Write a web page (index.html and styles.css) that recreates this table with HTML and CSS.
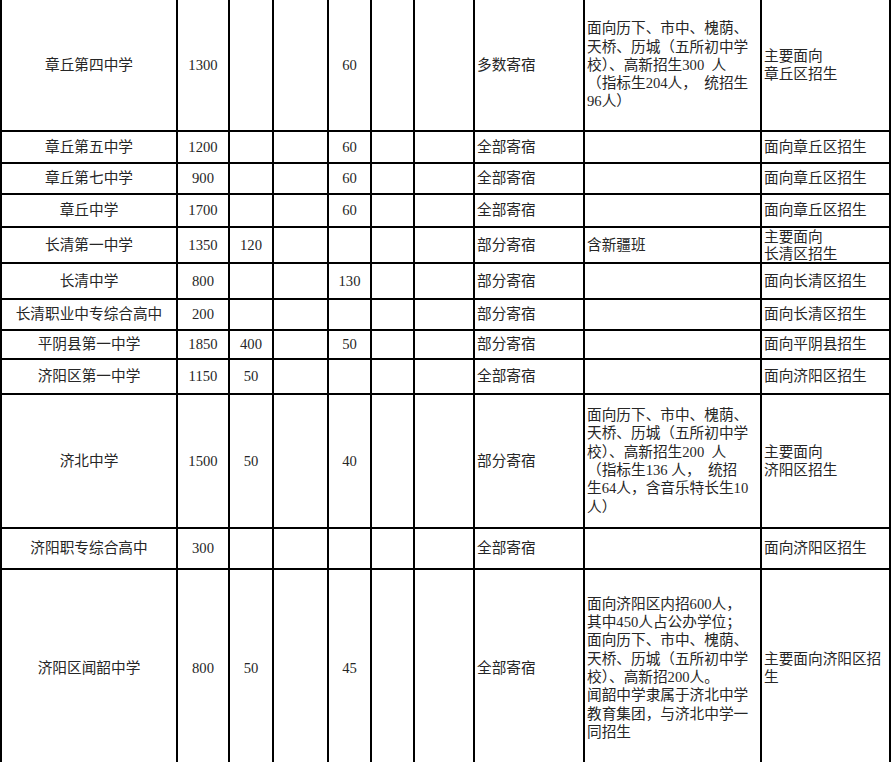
FILE: index.html
```html
<!DOCTYPE html>
<html lang="zh-CN">
<head>
<meta charset="utf-8">
<title>招生计划表</title>
<link rel="stylesheet" href="styles.css">
</head>
<body>
<table class="sheet">
  <colgroup>
    <col class="c1"><col class="c2"><col class="c3"><col class="c4"><col class="c5">
    <col class="c6"><col class="c7"><col class="c8"><col class="c9"><col class="c10">
  </colgroup>
  <tbody>
    <tr class="r1">
      <td>章丘第四中学</td><td>1300</td><td></td><td></td><td>60</td><td></td><td></td>
      <td class="l">多数寄宿</td>
      <td class="l">面向历下、市中、槐荫、<br>天桥、历城（五所初中学<br>校）、高新招生300&nbsp; 人<br>（指标生204人，&nbsp; 统招生<br>96人）</td>
      <td class="l">主要面向<br>章丘区招生</td>
    </tr>
    <tr class="r2">
      <td>章丘第五中学</td><td>1200</td><td></td><td></td><td>60</td><td></td><td></td>
      <td class="l">全部寄宿</td><td class="l"></td><td class="l">面向章丘区招生</td>
    </tr>
    <tr class="r3">
      <td>章丘第七中学</td><td>900</td><td></td><td></td><td>60</td><td></td><td></td>
      <td class="l">全部寄宿</td><td class="l"></td><td class="l">面向章丘区招生</td>
    </tr>
    <tr class="r4">
      <td>章丘中学</td><td>1700</td><td></td><td></td><td>60</td><td></td><td></td>
      <td class="l">全部寄宿</td><td class="l"></td><td class="l">面向章丘区招生</td>
    </tr>
    <tr class="r5">
      <td>长清第一中学</td><td>1350</td><td>120</td><td></td><td></td><td></td><td></td>
      <td class="l">部分寄宿</td><td class="l">含新疆班</td><td class="l tight">主要面向<br>长清区招生</td>
    </tr>
    <tr class="r6">
      <td>长清中学</td><td>800</td><td></td><td></td><td>130</td><td></td><td></td>
      <td class="l">部分寄宿</td><td class="l"></td><td class="l">面向长清区招生</td>
    </tr>
    <tr class="r7">
      <td>长清职业中专综合高中</td><td>200</td><td></td><td></td><td></td><td></td><td></td>
      <td class="l">部分寄宿</td><td class="l"></td><td class="l">面向长清区招生</td>
    </tr>
    <tr class="r8">
      <td>平阴县第一中学</td><td>1850</td><td>400</td><td></td><td>50</td><td></td><td></td>
      <td class="l">部分寄宿</td><td class="l"></td><td class="l">面向平阴县招生</td>
    </tr>
    <tr class="r9">
      <td>济阳区第一中学</td><td>1150</td><td>50</td><td></td><td></td><td></td><td></td>
      <td class="l">全部寄宿</td><td class="l"></td><td class="l">面向济阳区招生</td>
    </tr>
    <tr class="r10">
      <td>济北中学</td><td>1500</td><td>50</td><td></td><td>40</td><td></td><td></td>
      <td class="l">部分寄宿</td>
      <td class="l">面向历下、市中、槐荫、<br>天桥、历城（五所初中学<br>校）、高新招生200&nbsp; 人<br>（指标生136 人，&nbsp; 统招<br>生64人，含音乐特长生10<br>人）</td>
      <td class="l">主要面向<br>济阳区招生</td>
    </tr>
    <tr class="r11">
      <td>济阳职专综合高中</td><td>300</td><td></td><td></td><td></td><td></td><td></td>
      <td class="l">全部寄宿</td><td class="l"></td><td class="l">面向济阳区招生</td>
    </tr>
    <tr class="r12">
      <td>济阳区闻韶中学</td><td>800</td><td>50</td><td></td><td>45</td><td></td><td></td>
      <td class="l">全部寄宿</td>
      <td class="l">面向济阳区内招600人，<br>其中450人占公办学位；<br>面向历下、市中、槐荫、<br>天桥、历城（五所初中学<br>校）、高新招200人。<br>闻韶中学隶属于济北中学<br>教育集团，与济北中学一<br>同招生</td>
      <td class="l">主要面向济阳区招生</td>
    </tr>
  </tbody>
</table>
</body>
</html>
```
FILE: styles.css
```css
html, body {
  margin: 0;
  padding: 0;
  background: #ffffff;
  overflow: hidden;
}

.sheet {
  width: 891px;
  table-layout: fixed;
  border-collapse: separate;
  border-spacing: 0;
  font-family: "Liberation Serif", "Noto Sans CJK SC", serif;
  font-size: 14.67px;
  line-height: 18.33px;
  color: #262626;
}

.c1 { width: 178px; }
.c2 { width: 52px; }
.c3 { width: 44px; }
.c4 { width: 55px; }
.c5 { width: 43px; }
.c6 { width: 43px; }
.c7 { width: 60px; }
.c8 { width: 110px; }
.c9 { width: 177px; }
.c10 { width: 129px; }

.sheet td {
  border-right: 2px solid #000;
  border-bottom: 2px solid #000;
  padding: 0 2px;
  vertical-align: middle;
  text-align: center;
  white-space: nowrap;
}

.sheet td:first-child {
  border-left: 2px solid #000;
}

.sheet td.l {
  text-align: left;
  white-space: normal;
}

.sheet td.tight {
  line-height: 16.5px;
  padding-top: 1px;
}

.r1 { height: 132px; }
.r2 { height: 32px; }
.r3 { height: 31px; }
.r4 { height: 33px; }
.r5 { height: 35px; }
.r6 { height: 36px; }
.r7 { height: 31px; }
.r8 { height: 29px; }
.r9 { height: 35px; }
.r10 { height: 134px; }
.r11 { height: 41px; }
.r12 { height: 198px; }
```
